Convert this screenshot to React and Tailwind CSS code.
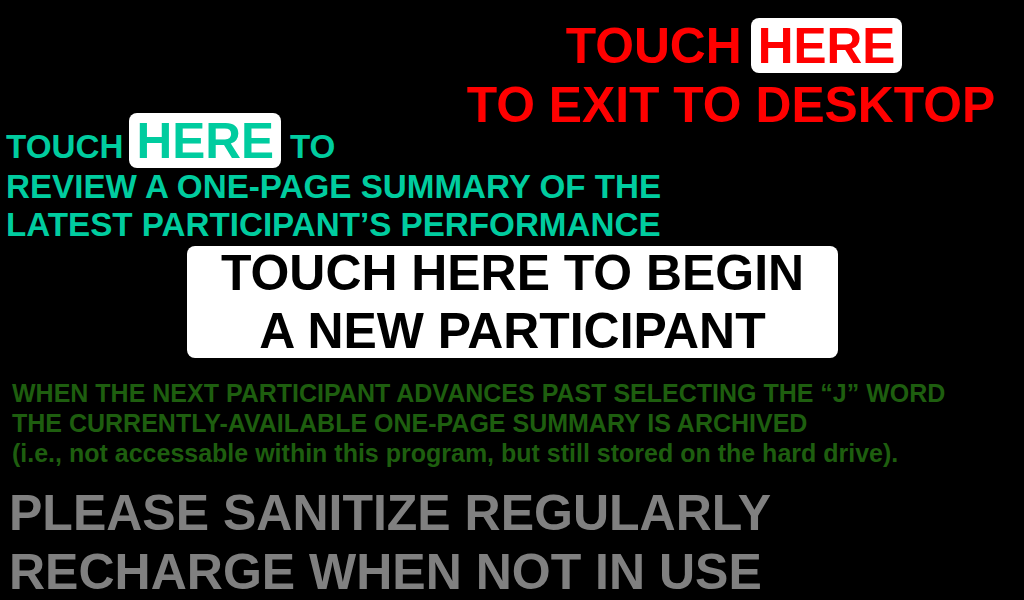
const FONT = "font-['Liberation_Sans',Arial,sans-serif]";

function HereBox({ color }) {
  return (
    <span className={`inline-block bg-white rounded-lg px-[7px] text-[49.5px] leading-[55px] h-[55px] ${color}`}>
      HERE
    </span>
  );
}

export default function App() {
  return (
    <div className={`w-[1024px] h-[600px] bg-black overflow-hidden font-bold ${FONT}`}>
      {/* exit to desktop */}
      <div className="pt-[18px] ml-[466px] w-[530px] flex flex-col items-center text-[#ff0000] text-[49.8px]">
        <div className="flex items-baseline gap-[9px] leading-[55px] pl-[6px]">
          <span>TOUCH</span>
          <HereBox color="text-[#ff0000]" />
        </div>
        <div className="mt-[4px] leading-[55px] whitespace-nowrap">TO EXIT TO DESKTOP</div>
      </div>

      {/* one-page summary */}
      <div className="-mt-[20px] pl-[6px] text-[#00cc9f] text-[33.2px] leading-[38px]">
        <div className="flex items-baseline h-[55px]">
          <span className="leading-[33px]">TOUCH</span>
          <span className="ml-[6px]">
            <HereBox color="text-[#00cc9f]" />
          </span>
          <span className="ml-[9px] leading-[33px]">TO</span>
        </div>
        <div className="whitespace-nowrap">REVIEW A ONE-PAGE SUMMARY OF THE</div>
        <div className="whitespace-nowrap">LATEST PARTICIPANT’S PERFORMANCE</div>
      </div>

      {/* new participant */}
      <div className="mt-[2px] ml-[187px] w-[651px] h-[112px] bg-white rounded-lg flex items-center justify-center">
        <div className="text-center text-black text-[49.9px] leading-[58px] whitespace-nowrap">
          TOUCH HERE TO BEGIN
          <br />
          A NEW PARTICIPANT
        </div>
      </div>

      {/* archive note */}
      <div className="mt-[20px] pl-[12px] text-[#1e5e0f] text-[25px] leading-[30px] whitespace-nowrap">
        <div>WHEN THE NEXT PARTICIPANT ADVANCES PAST SELECTING THE “J” WORD</div>
        <div>THE CURRENTLY-AVAILABLE ONE-PAGE SUMMARY IS ARCHIVED</div>
        <div>(i.e., not accessable within this program, but still stored on the hard drive).</div>
      </div>

      {/* reminders */}
      <div className="mt-[15px] pl-[9px] text-[#808080] text-[50px] whitespace-nowrap">
        <div className="leading-[60px]">PLEASE SANITIZE REGULARLY</div>
        <div className="mt-[2px] leading-[54px]">RECHARGE WHEN NOT IN USE</div>
      </div>
    </div>
  );
}
